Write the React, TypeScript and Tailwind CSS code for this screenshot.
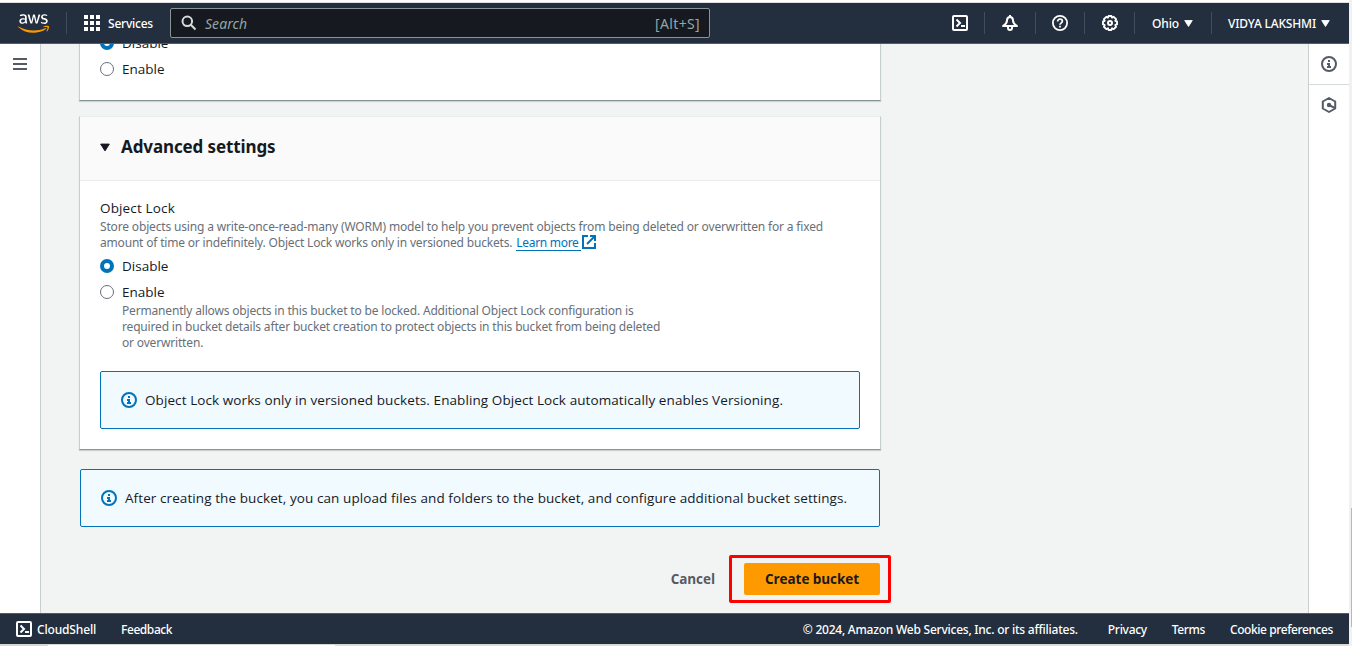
import React from 'react';
import type { ReactNode } from 'react';
import { FaAws } from 'react-icons/fa';

function TerminalIcon() {
  return (
    <svg className="size-4 shrink-0" viewBox="0 0 16 16" fill="none" stroke="currentColor" strokeWidth="2" strokeLinejoin="round">
      <rect x="1" y="1" width="14" height="14" rx="1" />
      <path d="M4.5 4.500 8 8l-3.500 3.500" strokeLinejoin="miter" />
      <path d="M9 11h4" />
    </svg>
  );
}

function BellIcon() {
  return (
    <svg className="size-4 shrink-0" viewBox="0 0 16 16" fill="none" stroke="currentColor" strokeWidth="2" strokeLinejoin="round">
      <path d="M8 2C6 2 5 3.500 5 5.500 5 8 3.500 9.500 1 11h14c-2.500-1.500-4-3-4-5.500C11 3.500 10 2 8 2Z" />
      <path d="M8 0v2" />
      <path d="M6 12v1a2 2 0 0 0 4 0v-1" />
    </svg>
  );
}

function HelpIcon() {
  return (
    <svg className="size-4 shrink-0" viewBox="0 0 16 16" fill="none" stroke="currentColor">
      <circle cx="8" cy="8" r="7.100" strokeWidth="1.800" />
      <path d="M5.600 6.500C5.600 5 6.600 4.200 8 4.200s2.400.8 2.400 2.100C10.400 7.900 8 7.800 8 9.800" strokeWidth="1.700" />
      <path d="M8 10.800v1.700" strokeWidth="1.800" />
    </svg>
  );
}

function GearIcon() {
  return (
    <svg className="size-4 shrink-0" viewBox="0 0 16 16" fill="none" stroke="currentColor" strokeLinejoin="round">
      <path
        d="M6.600 1h2.800l.6 1.600 1.700-.8 2.400 2.400-.8 1.700 1.700.6v2.900l-1.700.6.8 1.800-2.400 2.300-1.700-.8L9.400 15H6.600L6 13.300l-1.700.8-2.400-2.300.8-1.800L1 9.400V6.500l1.700-.6-.8-1.700 2.400-2.400 1.700.8Z"
        strokeWidth="1.900"
      />
      <circle cx="8" cy="8" r="2" strokeWidth="2" />
    </svg>
  );
}

function InfoIcon() {
  return (
    <svg className="size-4 shrink-0" viewBox="0 0 16 16" fill="none" stroke="currentColor">
      <circle cx="8" cy="8" r="7" strokeWidth="2" />
      <path d="M7 4h2v2H7zM6 7h3v3h1v2H6v-2h1V9H6z" fill="currentColor" stroke="none" />
    </svg>
  );
}

function HexagonIcon() {
  return (
    <svg className="size-4 shrink-0" viewBox="0 0 16 16" fill="none" stroke="currentColor" strokeWidth="2" strokeLinejoin="round">
      <path d="M8 1 14.200 4.500v7L8 15 1.800 11.500v-7Z" />
      <circle cx="8" cy="8" r="2.200" fill="currentColor" stroke="none" />
      <path d="m8 8 6 3.200" />
    </svg>
  );
}

function ExternalIcon() {
  return (
    <svg className="size-3.5 shrink-0" viewBox="0 0 14 14" fill="none" stroke="currentColor" strokeWidth="2">
      <path d="M6 1H1v12h12V8" />
      <path d="M8 1h5v5M12.500 1.500 5 9" />
    </svg>
  );
}

function SearchIcon() {
  return (
    <svg className="size-4 shrink-0" viewBox="0 0 16 16" fill="none" stroke="currentColor" strokeWidth="2">
      <circle cx="6.300" cy="6.300" r="4.800" />
      <path d="m9.800 9.800 4.700 4.700" />
    </svg>
  );
}

function Caret({ className }: { className: string }) {
  return (
    <svg className={className} viewBox="0 0 10 8" fill="currentColor" stroke="currentColor" strokeLinejoin="round">
      <path d="M.7.600h8.600L5 7.400Z" />
    </svg>
  );
}

function AwsLogo() {
  return (
    <div className="relative ml-[18px] h-[25px] w-[31px] shrink-0">
      <FaAws className="block h-[25px] w-[31px] text-[#ff9900]" />
      <div className="absolute top-0 left-0 h-3.5 w-[31px] overflow-hidden bg-[#232f3e]">
        <FaAws className="block h-[25px] w-[31px] text-white" />
      </div>
    </div>
  );
}

function Divider() {
  return <div className="h-[22px] w-px shrink-0 bg-[#414d5c]" />;
}

function TopBar() {
  return (
    <header className="flex h-[41px] shrink-0 items-center border-b border-[#545b64] bg-[#232f3e] text-[12px] font-medium text-white">
      <AwsLogo />
      <div className="ml-[17px]">
        <Divider />
      </div>
      <div className="ml-[17px] grid size-4 grid-cols-3 gap-0.5">
        {Array.from({ length: 9 }, (_, i) => (
          <div key={i} className="bg-white" />
        ))}
      </div>
      <span className="ml-2 w-[62px] pt-px tracking-[-0.220px]">Services</span>
      <div className="flex h-[30px] w-[540px] items-center rounded-[2px] border border-[#879596] bg-[#16191f] pr-[9px] pl-2.5 text-[#95a5a6]">
        <span className="text-[#d5dbdb]">
          <SearchIcon />
        </span>
        <span className="ml-2 flex-1 text-[14px] font-normal tracking-[0.050px] italic">Search</span>
        <span className="text-[14px] font-normal tracking-[0.350px]">[Alt+S]</span>
      </div>
      <div className="ml-auto flex items-center">
        <div className="flex w-8 justify-start"><TerminalIcon /></div>
        <Divider />
        <div className="flex w-[50px] justify-center"><BellIcon /></div>
        <Divider />
        <div className="flex w-12 justify-center"><HelpIcon /></div>
        <Divider />
        <div className="flex w-[49px] justify-center"><GearIcon /></div>
        <Divider />
        <div className="flex w-[76px] items-center pl-[17px]">
          <span className="pt-px tracking-[-0.100px]">Ohio</span>
          <Caret className="ml-[5px] h-[7px] w-[9px]" />
        </div>
        <Divider />
        <div className="flex w-[137px] items-center pl-4">
          <span className="pt-px tracking-[-0.170px] whitespace-nowrap">VIDYA LAKSHMI</span>
          <Caret className="ml-[5px] h-[7px] w-[9px]" />
        </div>
      </div>
    </header>
  );
}

function Radio({ label, checked }: { label: string; checked?: boolean }) {
  return (
    <div className="flex h-[22px] items-center gap-2 font-['Open_Sans'] text-[13.500px] text-[#16191f]">
      {checked ? (
        <div className="flex size-3.5 items-center justify-center rounded-full bg-[#0073bb]">
          <div className="size-1.5 rounded-full bg-white" />
        </div>
      ) : (
        <div className="size-3.5 rounded-full border border-[#687078] bg-white" />
      )}
      <span>{label}</span>
    </div>
  );
}

function InfoAlert({ children }: { children: ReactNode }) {
  return (
    <div className="flex h-[58px] items-center gap-2 rounded-[2px] border border-[#0073bb] bg-[#f1faff] pl-5 font-['Open_Sans'] text-[13.500px] tracking-[0.088px] whitespace-nowrap text-[#16191f]">
      <span className="text-[#0073bb]">
        <InfoIcon />
      </span>
      <span>{children}</span>
    </div>
  );
}

function AdvancedSettings() {
  return (
    <section className="mt-[15px] -mr-px -ml-px h-[334px] border border-t-[#eaeded] border-r-[#c8cfd1] border-b-[#879596] border-l-[#c8cfd1] bg-white shadow-[0_1px_1px_0_rgba(0,28,36,0.15)]">
      <div className="flex h-16 items-center border-b border-[#eaeded] bg-[#fafafa] pb-[3px] pl-5">
        <Caret className="h-[9px] w-2.5 text-[#16191f]" />
        <h2 className="ml-[11px] text-[17px] font-bold tracking-[-0.110px] text-[#16191f]">Advanced settings</h2>
      </div>
      <div className="flex flex-col px-5 pt-4">
        <h3 className="font-['Open_Sans'] text-[13.500px] leading-[22px] tracking-[0.150px] text-[#16191f]">Object Lock</h3>
        <p className="text-[12px] leading-4 tracking-[-0.160px] whitespace-nowrap text-[#687078]">
          Store objects using a write-once-read-many (WORM) model to help you prevent objects from being deleted or overwritten for a fixed
        </p>
        <div className="flex h-4 items-start text-[12px] leading-4 tracking-[-0.185px] whitespace-nowrap text-[#687078]">
          <span>amount of time or indefinitely. Object Lock works only in versioned buckets.</span>
          <a className="ml-1 flex gap-px text-[#0073bb]">
            <span className="h-4 w-[65px] border-b border-[#0073bb] leading-4 tracking-[-0.300px]">Learn more</span>
            <ExternalIcon />
          </a>
        </div>
        <div className="mt-1 flex flex-col gap-1">
          <Radio label="Disable" checked />
          <Radio label="Enable" />
        </div>
        <p className="pl-[22px] text-[12px] leading-4 tracking-[-0.170px] whitespace-nowrap text-[#687078]">
          Permanently allows objects in this bucket to be locked. Additional Object Lock configuration is
          <br />
          required in bucket details after bucket creation to protect objects in this bucket from being deleted
          <br />
          or overwritten.
        </p>
        <div className="mt-5">
          <InfoAlert>Object Lock works only in versioned buckets. Enabling Object Lock automatically enables Versioning.</InfoAlert>
        </div>
      </div>
    </section>
  );
}

function Footer() {
  return (
    <footer className="flex h-[31px] shrink-0 items-center border-t border-[#545b64] bg-[#232f3e] px-4 text-[12px] font-medium whitespace-nowrap text-white">
      <TerminalIcon />
      <div className="flex flex-1 pt-px">
        <span className="ml-[5px] w-[84px] tracking-[-0.160px]">CloudShell</span>
        <span className="tracking-[-0.420px]">Feedback</span>
        <span className="ml-auto tracking-[-0.237px]">© 2024, Amazon Web Services, Inc. or its affiliates.</span>
        <span className="ml-[30px] tracking-[-0.290px]">Privacy</span>
        <span className="ml-[25px] tracking-[-0.400px]">Terms</span>
        <span className="ml-[25px] tracking-[-0.410px]">Cookie preferences</span>
      </div>
    </footer>
  );
}

export default function App() {
  return (
    <div className="flex h-[646px] w-[1352px] overflow-hidden bg-[#f1f1f1] font-['Noto_Sans','Open_Sans',sans-serif]">
      <div className="flex w-[1349px] shrink-0 flex-col">
        <div className="h-[3px] shrink-0 border-b border-[#e3e1df] bg-white" />
        <TopBar />
        <div className="flex min-h-0 flex-1 overflow-hidden bg-[#f2f3f3]">
          <nav className="w-[41px] shrink-0 border-r border-[#c8cfd1] bg-white pt-3.5 pl-[13px]">
            <div className="flex w-3.5 flex-col gap-[3px]">
              <div className="h-0.5 bg-[#545b64]" />
              <div className="h-0.5 bg-[#545b64]" />
              <div className="h-0.5 bg-[#545b64]" />
            </div>
          </nav>
          <main className="ml-[39px] w-[800px]">
            <section className="-mr-px -ml-px flow-root h-[57px] border-r border-b border-l border-r-[#c8cfd1] border-b-[#879596] border-l-[#c8cfd1] bg-white pl-5 shadow-[0_1px_1px_0_rgba(0,28,36,0.15)]">
              <div className="-mt-3 flex flex-col gap-1">
                <Radio label="Disable" checked />
                <Radio label="Enable" />
              </div>
            </section>
            <AdvancedSettings />
            <div className="mt-[19px]">
              <InfoAlert>
                After creating the bucket, you can upload files and folders to the bucket, and configure additional bucket settings.
              </InfoAlert>
            </div>
            <div className="mt-7 -mr-[11px] flex items-center justify-end gap-3.5 font-['Open_Sans'] text-[13.500px] font-bold tracking-[-0.050px]">
              <button className="text-[#545b64]">Cancel</button>
              <div className="flex h-12 w-[162px] items-center rounded-[2px] border-3 border-[#ff0000] pl-3">
                <button className="h-8 w-[136px] rounded-[2px] bg-[#ff9900] text-[#16191f]">Create bucket</button>
              </div>
            </div>
          </main>
          <aside className="ml-auto flex w-[41px] shrink-0 flex-col border-l border-[#c8cfd1] bg-white text-[#545b64]">
            <div className="flex h-[41px] items-center justify-center border-b border-[#d5dbdb]">
              <InfoIcon />
            </div>
            <div className="flex h-10 items-center justify-center">
              <HexagonIcon />
            </div>
          </aside>
        </div>
        <Footer />
        <div className="flex h-0.5 shrink-0 border-t border-[#d5d8d4]">
          <div className="w-12 bg-[#d3ddc0]" />
          <div className="w-[287px] bg-white" />
          <div className="flex-1 bg-[#e0ddd4]" />
        </div>
      </div>
      <div className="flex w-[3px] justify-end pt-[508px]">
        <div className="h-[119px] w-px bg-[#b8b8b8]" />
      </div>
    </div>
  );
}
